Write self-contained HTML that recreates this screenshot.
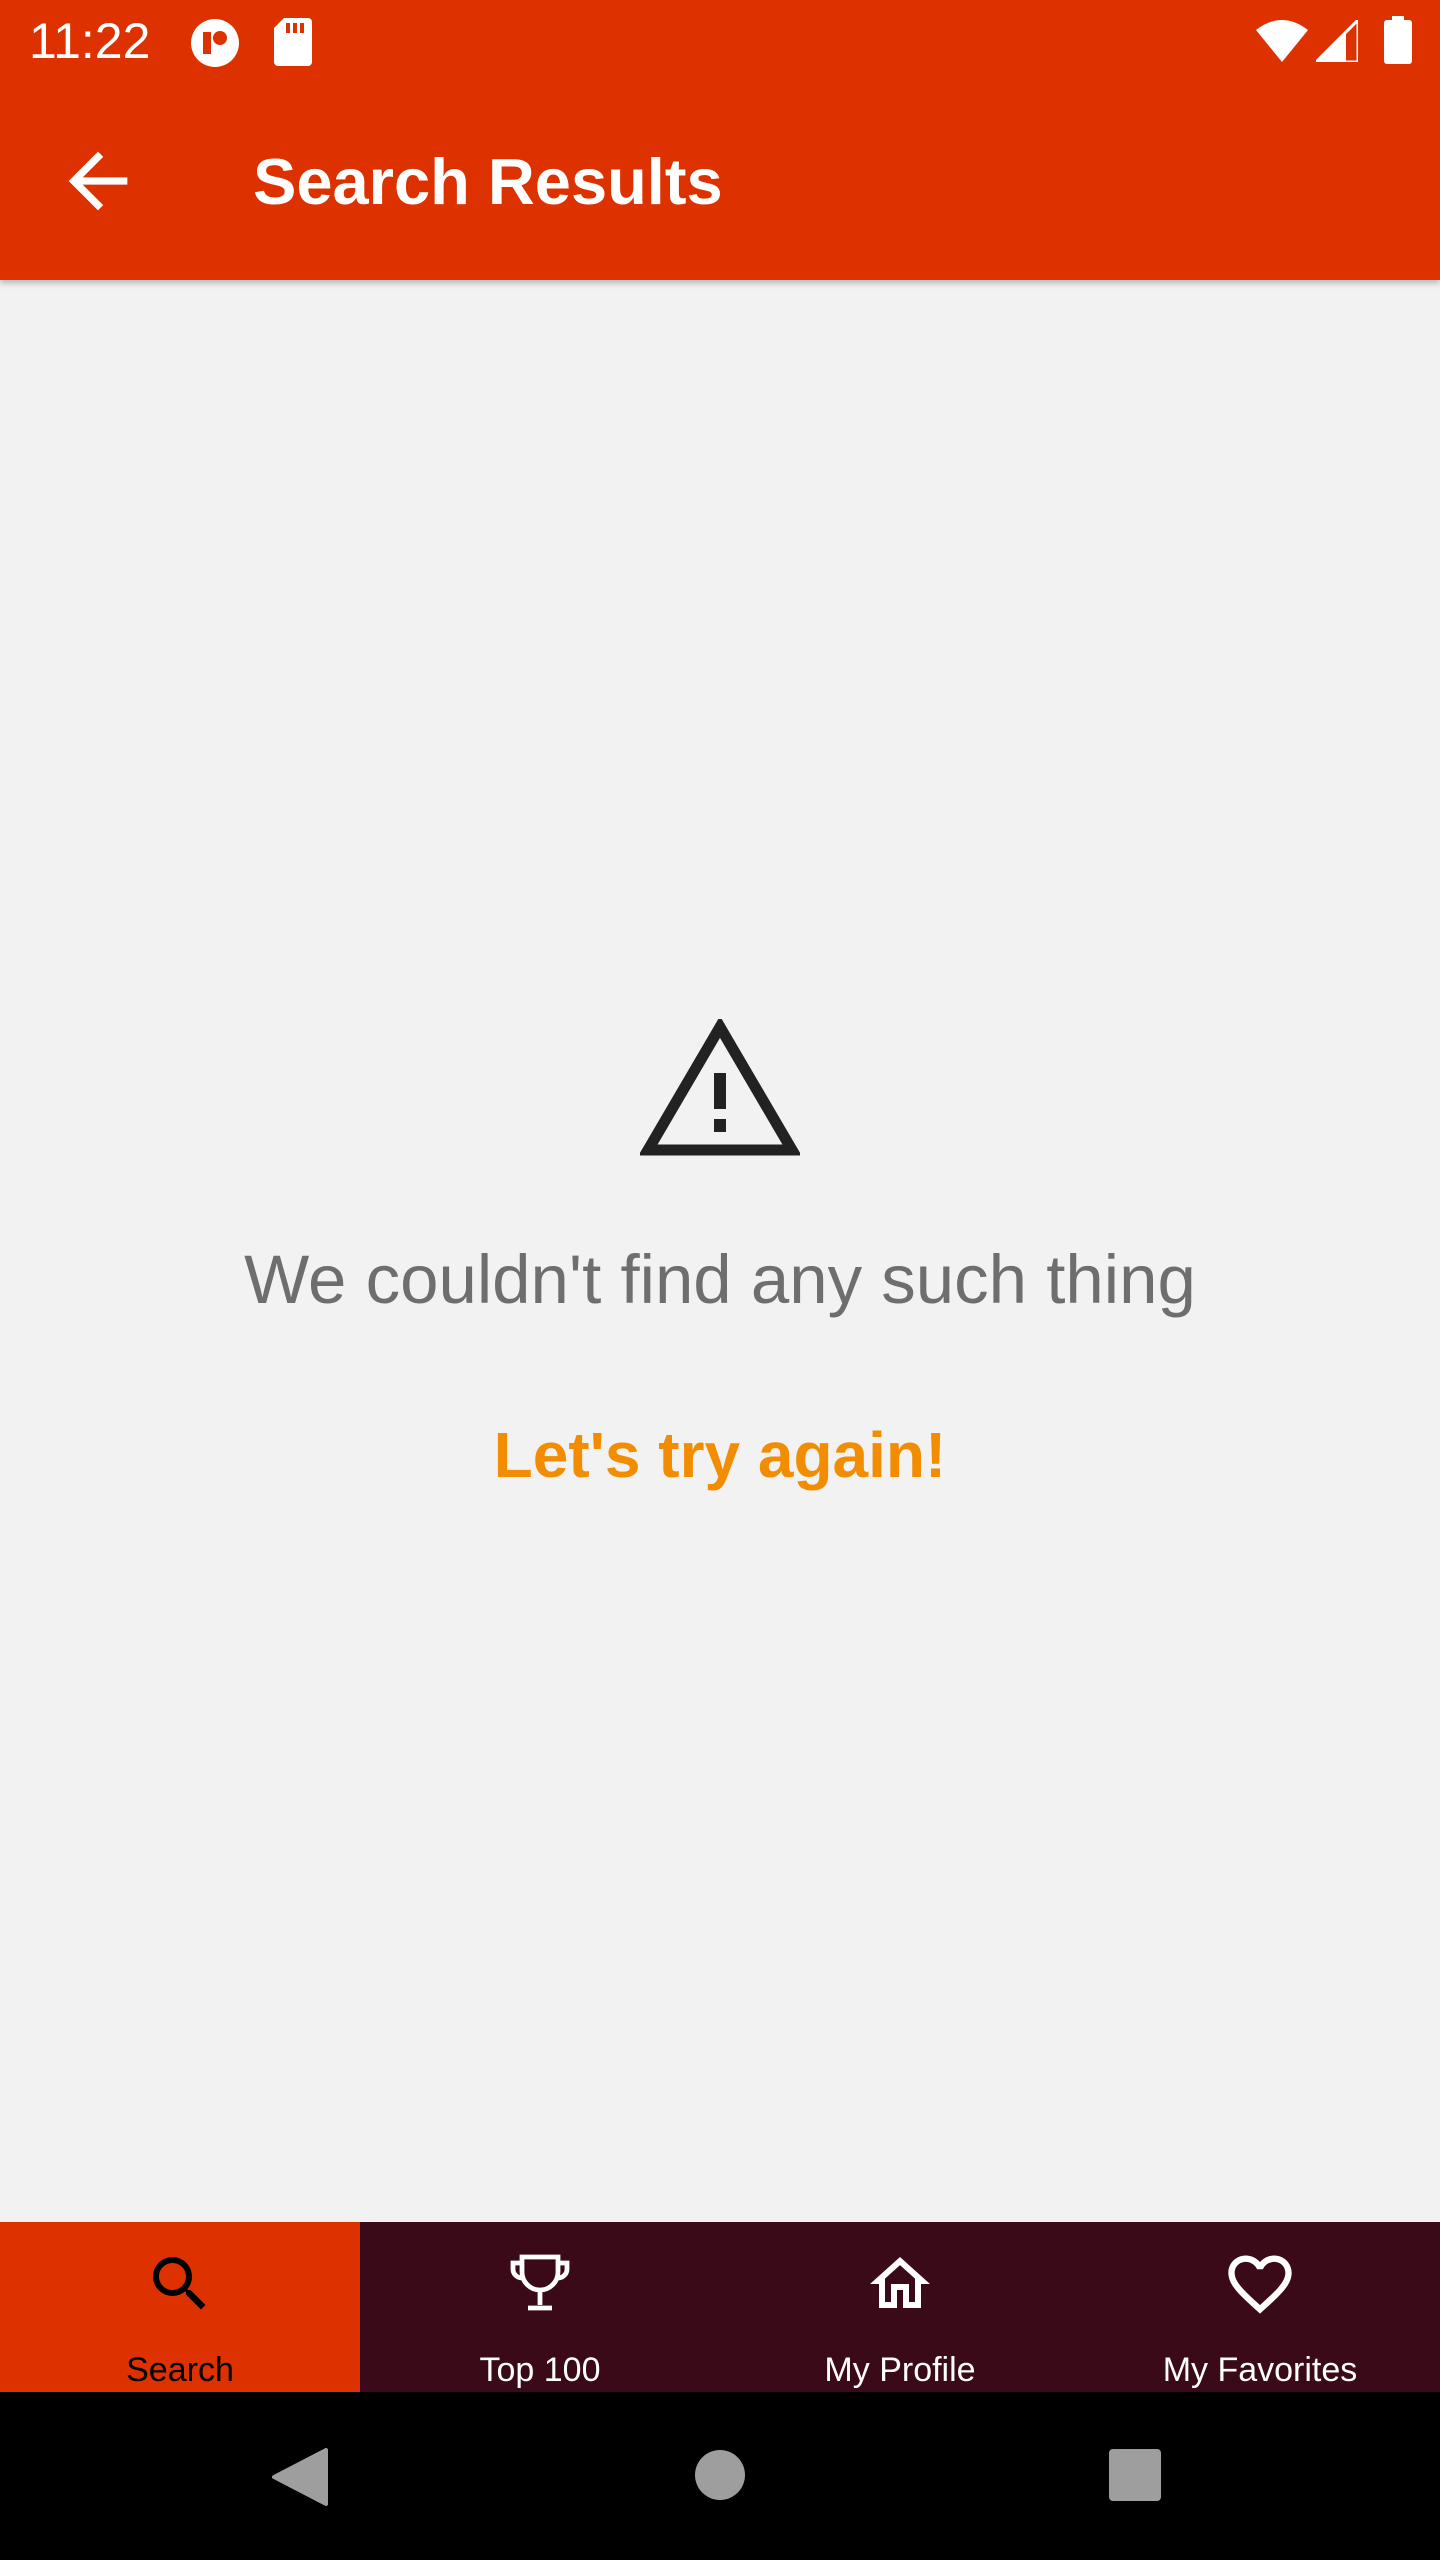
<!DOCTYPE html>
<html><head><meta charset="utf-8"><style>
*{margin:0;padding:0;box-sizing:border-box}
body{width:1440px;height:2560px;background:#f2f2f2;font-family:"Liberation Sans",sans-serif;position:relative;overflow:hidden}
.abs{position:absolute}
#top{left:0;top:0;width:1440px;height:280px;background:#dd3100;box-shadow:0 3px 6px rgba(0,0,0,.25)}
#nav{left:0;top:2222px;width:1440px;height:170px;background:#3a0a18}
.tab{position:absolute;top:0;width:360px;height:170px;color:#fff;text-align:center}
.tab .lbl{position:absolute;left:0;right:0;top:129px;font-size:34px}
.tab svg{position:absolute;left:144px;top:26px}
#sys{left:0;top:2392px;width:1440px;height:168px;background:#000}
</style></head><body>
<div id="top" class="abs">
  <div class="abs" style="left:29px;top:12px;font-size:50px;color:#fff">11:22</div>
  <svg class="abs" style="left:190px;top:18px" width="50" height="50" viewBox="0 0 50 50"><circle cx="25" cy="25" r="24" fill="#fff"/><rect x="13" y="14" width="8" height="22" fill="#dd3100"/><circle cx="30" cy="20" r="7" fill="#dd3100"/></svg>
  <svg class="abs" style="left:274px;top:18px" width="38" height="48" viewBox="0 0 38 48"><path d="M10 0H34a4 4 0 0 1 4 4V44a4 4 0 0 1-4 4H4a4 4 0 0 1-4-4V10Z" fill="#fff"/><rect x="12" y="5" width="4" height="10" fill="#dd3100"/><rect x="19" y="5" width="4" height="10" fill="#dd3100"/><rect x="26" y="5" width="4" height="10" fill="#dd3100"/></svg>
  <svg class="abs" style="left:1256px;top:20px" width="52" height="42" viewBox="0 0 52 42"><path d="M0 10Q26-10 52 10L26 42Z" fill="#fff"/></svg>
  <svg class="abs" style="left:1316px;top:20px" width="42" height="42" viewBox="0 0 42 42"><path d="M42 0V42H0Z" fill="none" stroke="#fff" stroke-width="3"/><path d="M30 12V42H0L30 12Z" fill="#fff"/></svg>
  <svg class="abs" style="left:1384px;top:16px" width="28" height="48" viewBox="0 0 28 48"><rect x="8" y="0" width="12" height="6" fill="#fff"/><rect x="0" y="4" width="28" height="44" rx="3" fill="#fff"/></svg>
  <svg class="abs" style="left:54px;top:137px" width="88" height="88" viewBox="0 0 24 24"><path d="M20 11H7.83l5.59-5.59L12 4l-8 8 8 8 1.41-1.41L7.83 13H20v-2z" fill="#fff"/></svg>
  <div class="abs" style="left:253px;top:144px;font-size:65px;font-weight:bold;color:#fff">Search Results</div>
</div>
<svg class="abs" style="left:640px;top:1019px" width="160" height="137" viewBox="0 0 160 137"><path d="M80 8L8 131H152Z" fill="none" stroke="#222" stroke-width="11" stroke-linejoin="miter"/><rect x="74" y="54" width="12" height="36" fill="#222"/><rect x="74" y="100" width="12" height="13" fill="#222"/></svg>
<div class="abs" style="left:0;width:1440px;top:1240px;text-align:center;font-size:69px;color:#6e6e6e">We couldn't find any such thing</div>
<div class="abs" style="left:0;width:1440px;top:1418px;text-align:center;font-size:64px;font-weight:bold;color:#f28c00">Let's try again!</div>
<div id="nav" class="abs">
  <div class="tab" style="left:0;background:#dd3100;color:#000">
    <svg width="72" height="72" viewBox="0 0 24 24"><path d="M15.5 14h-.79l-.28-.27A6.47 6.47 0 0 0 16 9.5 6.5 6.5 0 1 0 9.5 16c1.61 0 3.09-.59 4.23-1.57l.27.28v.79l5 4.99L20.49 19l-4.99-5zm-6 0C7.01 14 5 11.99 5 9.5S7.01 5 9.5 5 14 7.01 14 9.5 11.99 14 9.5 14z" fill="#000"/></svg>
    <div class="lbl">Search</div></div>
  <div class="tab" style="left:360px">
    <svg width="72" height="72" viewBox="0 0 24 24"><path d="M6 3h12v5a6 6 0 0 1-12 0zM6 5H3v2a3 3 0 0 0 3 3M18 5h3v2a3 3 0 0 1-3 3M12 14v5M8 20h8" fill="none" stroke="#fff" stroke-width="1.6"/></svg>
    <div class="lbl">Top 100</div></div>
  <div class="tab" style="left:720px">
    <svg width="72" height="72" viewBox="0 0 24 24"><path d="M12 5.69l5 4.5V18h-2v-6H9v6H7v-7.81l5-4.5M12 3L2 12h3v8h6v-6h2v6h6v-8h3L12 3z" fill="#fff"/></svg>
    <div class="lbl">My Profile</div></div>
  <div class="tab" style="left:1080px">
    <svg width="76" height="76" viewBox="0 0 24 24" style="left:142px;top:24px"><path d="M16.5 3c-1.74 0-3.41.81-4.5 2.09C10.91 3.81 9.240 3 7.5 3 4.42 3 2 5.42 2 8.5c0 3.78 3.4 6.86 8.55 11.54L12 21.35l1.45-1.32C18.6 15.36 22 12.28 22 8.5 22 5.420 19.58 3 16.5 3zm-4.4 15.55l-.1.1-.1-.1C7.14 14.24 4 11.39 4 8.5 4 6.5 5.5 5 7.5 5c1.54 0 3.04.99 3.57 2.36h1.87C13.46 5.99 14.96 5 16.5 5c2 0 3.5 1.5 3.5 3.5 0 2.89-3.14 5.74-7.9 10.05z" fill="#fff"/></svg>
    <div class="lbl">My Favorites</div></div>
</div>
<div id="sys" class="abs">
  <svg class="abs" style="left:272px;top:56px" width="56" height="58" viewBox="0 0 56 58"><path d="M54 2V56L2 29Z" fill="#9e9e9e" stroke="#9e9e9e" stroke-width="4" stroke-linejoin="round"/></svg>
  <div class="abs" style="left:695px;top:58px;width:50px;height:50px;border-radius:50%;background:#9e9e9e"></div>
  <div class="abs" style="left:1109px;top:57px;width:52px;height:52px;border-radius:4px;background:#9e9e9e"></div>
</div>
</body></html>
